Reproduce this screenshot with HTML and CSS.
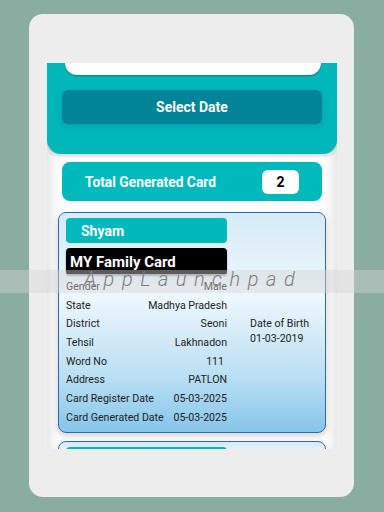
FILE: index.html
```html
<!DOCTYPE html>
<html>
<head>
<meta charset="utf-8">
<link rel="stylesheet" href="styles.css">
</head>
<body>
<div class="frame">
  <div class="screen">
    <div class="header">
      <div class="search"></div>
      <div class="select-btn">Select Date</div>
    </div>
    <div class="list">
      <div class="total">
        <span class="total-label">Total Generated Card</span>
        <span class="count">2</span>
      </div>
      <div class="card">
        <div class="card-left">
          <div class="name">Shyam</div>
          <div class="family">MY Family Card</div>
          <div class="rows">
            <div class="row"><span>Gender</span><span>Male</span></div>
            <div class="row"><span>State</span><span>Madhya Pradesh</span></div>
            <div class="row"><span>District</span><span>Seoni</span></div>
            <div class="row"><span>Tehsil</span><span>Lakhnadon</span></div>
            <div class="row"><span>Word No</span><span class="pad">111</span></div>
            <div class="row"><span>Address</span><span>PATLON</span></div>
            <div class="row"><span>Card Register Date</span><span>05-03-2025</span></div>
            <div class="row"><span>Card Generated Date</span><span>05-03-2025</span></div>
          </div>
        </div>
        <div class="card-right">
          <div>Date of Birth</div>
          <div>01-03-2019</div>
        </div>
      </div>
      <div class="card card-next">
        <div class="card-left">
          <div class="name"></div>
        </div>
      </div>
    </div>
  </div>
</div>
<div class="watermark"><span>AppLaunchpad</span></div>
</body>
</html>
```
FILE: styles.css
```css
html, body {
  margin: 0;
  padding: 0;
}
body {
  width: 384px;
  height: 512px;
  background: #8aada1;
  font-family: Roboto, "Liberation Sans", sans-serif;
  overflow: hidden;
  position: relative;
}
.frame {
  margin: 14px 0 0 29px;
  width: 325px;
  height: 483px;
  background: #ededed;
  border-radius: 14px;
  padding: 49px 17px 0 18px;
  box-sizing: border-box;
}
.screen {
  width: 290px;
  height: 386px;
  overflow: hidden;
  display: flex;
  flex-direction: column;
  background: #ffffff;
  box-shadow: inset 14px 0 12px -10px rgba(0,0,0,0.12), inset -14px 0 12px -10px rgba(0,0,0,0.12);
}
.header {
  position: relative;
  z-index: 1;
  flex: none;
  height: 91px;
  background: #00b8bc;
  border-radius: 0 0 14px 14px;
  box-shadow: 0 2px 4px rgba(0,0,0,0.18);
  display: flex;
  flex-direction: column;
}
.search {
  margin: 0 16px 0 18px;
  height: 12px;
  background: #ffffff;
  border-radius: 0 0 14px 14px;
  box-shadow: 0 1px 2px rgba(0,0,0,0.3);
}
.select-btn {
  margin: 15px 15px 0 15px;
  height: 34px;
  background: #008498;
  border-radius: 6px;
  color: #ffffff;
  font-weight: 700;
  font-size: 14px;
  display: flex;
  align-items: center;
  justify-content: center;
  box-shadow: 0 3px 8px rgba(0,0,0,0.12);
}
.list {
  flex: 1;
  display: flex;
  flex-direction: column;
}
.total {
  margin: 8px 15px 0 15px;
  height: 39px;
  background: #00b9bd;
  border-radius: 8px;
  display: flex;
  align-items: center;
  justify-content: space-between;
  padding: 0 23px 0 23px;
}
.total-label {
  color: #ffffff;
  font-weight: 700;
  font-size: 13.8px;
}
.count {
  width: 37px;
  height: 24px;
  background: #ffffff;
  border-radius: 6px;
  display: flex;
  align-items: center;
  justify-content: center;
  font-weight: 700;
  font-size: 14px;
  color: #000000;
}
.card {
  flex: none;
  margin: 11px 11px 0 11px;
  height: 221px;
  box-sizing: border-box;
  border: 1px solid #2d6aa9;
  border-radius: 8px;
  background: linear-gradient(to bottom, #d6eaf8 0%, #eef7fd 38%, #b9dff4 75%, #86c5ea 100%);
  box-shadow: 0 3px 6px rgba(0,0,0,0.18);
  display: flex;
  padding: 5px 0 0 7px;
}
.card-next {
  margin-top: 8px;
  height: 40px;
}
.card-left {
  width: 161px;
  display: flex;
  flex-direction: column;
}
.name {
  height: 25px;
  background: #00b9bd;
  border-radius: 4px;
  color: #ffffff;
  font-weight: 700;
  font-size: 14px;
  padding-left: 15px;
  display: flex;
  align-items: center;
}
.family {
  margin-top: 5px;
  height: 26px;
  background: #000000;
  border-radius: 4px 4px 2px 2px;
  color: #ffffff;
  font-weight: 700;
  font-size: 15px;
  padding-left: 4px;
  display: flex;
  align-items: center;
  padding-top: 2px;
  box-sizing: border-box;
  box-shadow: 0 2px 2px rgba(0,0,0,0.35);
}
.rows {
  display: flex;
  flex-direction: column;
  margin-top: 3px;
}
.row {
  height: 18.7px;
  display: flex;
  justify-content: space-between;
  align-items: center;
  font-size: 10.6px;
  color: #222222;
}
.pad {
  padding-right: 3px;
}
.card-right {
  margin-left: 23px;
  padding-top: 98px;
  font-size: 10.6px;
  color: #222222;
  line-height: 15px;
}
.watermark {
  position: absolute;
  left: 0;
  top: 270px;
  width: 384px;
  height: 23px;
  background: rgba(214,214,214,0.43);
  display: flex;
  align-items: center;
}
.watermark span {
  margin-left: 84px;
  font-style: italic;
  font-weight: 300;
  font-size: 20px;
  letter-spacing: 7.5px;
  color: #7e7e7e;
  line-height: 23px;
  padding-bottom: 4px;
}
```
